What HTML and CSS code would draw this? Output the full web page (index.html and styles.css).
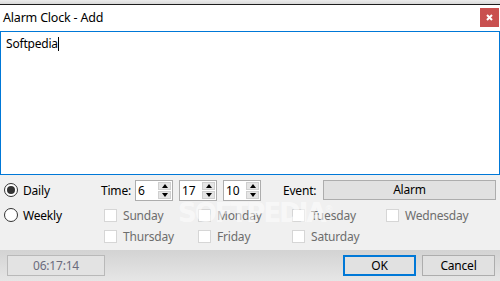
FILE: index.html
```html
<!DOCTYPE html>
<html lang="en">
<head>
    <meta charset="UTF-8">
    <title>Alarm Clock - Add</title>
    <link rel="stylesheet" href="styles.css">
</head>
<body>
    <div class="window">
        <div class="top-strip"></div>
        <div class="title-bar">
            <span class="title">Alarm Clock - Add</span>
            <div class="close-btn">
                <svg width="9" height="9" viewBox="0 0 9 9"><path d="M2 2 L7 7 M7 2 L2 7" stroke="#fff" stroke-width="2"/></svg>
            </div>
        </div>

        <div class="message-box">Softpedia<span class="caret"></span></div>

        <div class="options">
            <div class="row row-first">
                <div class="mode">
                    <span class="radio checked"></span>
                    <span>Daily</span>
                </div>
                <span class="time-label">Time:</span>
                <div class="spin"><span class="spin-value">6</span><div class="spin-btns"><span class="up"></span><span class="down"></span></div></div>
                <div class="spin"><span class="spin-value">17</span><div class="spin-btns"><span class="up"></span><span class="down"></span></div></div>
                <div class="spin"><span class="spin-value">10</span><div class="spin-btns"><span class="up"></span><span class="down"></span></div></div>
                <span class="event-label">Event:</span>
                <div class="event-btn">Alarm</div>
            </div>

            <div class="row row-second">
                <div class="mode">
                    <span class="radio"></span>
                    <span>Weekly</span>
                </div>
                <div class="days">
                    <label class="day"><span class="check"></span>Sunday</label>
                    <label class="day"><span class="check"></span>Monday</label>
                    <label class="day"><span class="check"></span>Tuesday</label>
                    <label class="day"><span class="check"></span>Wednesday</label>
                </div>
            </div>

            <div class="row row-third">
                <div class="mode"></div>
                <div class="days">
                    <label class="day"><span class="check"></span>Thursday</label>
                    <label class="day"><span class="check"></span>Friday</label>
                    <label class="day"><span class="check"></span>Saturday</label>
                </div>
            </div>

            <div class="watermark">SOFTPEDIA<sup>®</sup></div>
        </div>

        <div class="bottom-bar">
            <div class="clock">06:17:14</div>
            <div class="buttons">
                <div class="btn btn-default">OK</div>
                <div class="btn">Cancel</div>
            </div>
        </div>
    </div>
</body>
</html>
```

FILE: styles.css
```css
/* Alarm clock dialog */
body {
    margin: 0;
    font-family: "Noto Sans", "Open Sans", sans-serif;
    font-size: 12px;
    letter-spacing: -0.2px;
    color: #000;
}

.window {
    width: 500px;
    height: 281px;
    overflow: hidden;
    background-color: #f0f0f0;
}

.top-strip {
    height: 4px;
    background: linear-gradient(#ececec, #d9d9d9);
    border-bottom: 1px solid #1d1d1d;
}

.title-bar {
    height: 26px;
    background-color: #fff;
    display: flex;
    align-items: flex-start;
    justify-content: space-between;
}

.title {
    font-size: 12.5px;
    padding: 4px 0 0 3px;
}

.close-btn {
    width: 19px;
    height: 19px;
    margin: 3px 1px 0 0;
    background-color: #c9504f;
    display: flex;
    align-items: center;
    justify-content: center;
}

.message-box {
    height: 144px;
    background-color: #fff;
    border: 1px solid #0078d7;
    padding: 3px 5px;
    box-sizing: border-box;
}

.caret {
    display: inline-block;
    width: 1px;
    height: 14px;
    background-color: #000;
    vertical-align: -3px;
}

.options {
    position: relative;
    height: 75px;
    padding: 4px 0 0 4px;
    box-sizing: border-box;
}

.row {
    display: flex;
    align-items: center;
}

.row-first {
    height: 22px;
}

.row-second {
    height: 18px;
    margin-top: 5px;
}

.row-third {
    height: 18px;
    margin-top: 3px;
}

.mode {
    width: 97px;
    display: flex;
    align-items: center;
    gap: 5px;
}

.radio {
    width: 12px;
    height: 12px;
    border: 1px solid #333;
    border-radius: 50%;
    background-color: #fff;
    display: flex;
    align-items: center;
    justify-content: center;
}

.radio.checked::after {
    content: "";
    width: 8px;
    height: 8px;
    border-radius: 50%;
    background-color: #333;
}

.time-label {
    width: 34px;
}

.spin {
    width: 36px;
    height: 19px;
    border: 1px solid #adadad;
    background-color: #fff;
    display: flex;
    margin-right: 6px;
}

.spin-value {
    flex: 1;
    padding: 1px 0 0 2px;
    color: #000;
}

.spin-btns {
    width: 13px;
    display: flex;
    flex-direction: column;
    gap: 1px;
    padding: 1px;
}

.spin-btns span {
    flex: 1;
    background-color: #e5e5e5;
    border: 1px solid #cfcfcf;
    display: flex;
    align-items: center;
    justify-content: center;
}

.up::after {
    content: "";
    border-left: 3px solid transparent;
    border-right: 3px solid transparent;
    border-bottom: 4px solid #000;
}

.down::after {
    content: "";
    border-left: 3px solid transparent;
    border-right: 3px solid transparent;
    border-top: 4px solid #000;
}

.event-label {
    margin-left: 16px;
    width: 40px;
}

.event-btn {
    width: 171px;
    height: 18px;
    line-height: 18px;
    text-align: center;
    background-color: #e1e1e1;
    border: 1px solid #adadad;
}

.days {
    display: grid;
    grid-template-columns: repeat(4, 94px);
    margin-left: 3px;
}

.day {
    display: flex;
    align-items: center;
    color: #6d6d6d;
}

.check {
    width: 11px;
    height: 11px;
    border: 1px solid #d6d6d6;
    background-color: #fff;
    margin-right: 6px;
}

.watermark {
    position: absolute;
    left: 178px;
    top: 23px;
    font-family: "DejaVu Sans", sans-serif;
    font-weight: bold;
    font-size: 26px;
    color: rgba(255, 255, 255, 0.55);
    letter-spacing: -2px;
}

.watermark sup {
    font-size: 9px;
    font-weight: normal;
}

.bottom-bar {
    height: 31px;
    background: linear-gradient(#d3d3d3, #e6e6e6);
    display: flex;
    align-items: center;
    justify-content: space-between;
    padding: 0 5px 0 7px;
}

.clock {
    width: 96px;
    height: 19px;
    line-height: 19px;
    text-align: center;
    background-color: #e3e3e3;
    border: 1px solid #b9b9b9;
    color: #6b6b7d;
}

.buttons {
    display: flex;
    gap: 6px;
}

.btn {
    width: 71px;
    height: 19px;
    line-height: 19px;
    text-align: center;
    background-color: #e1e1e1;
    border: 1px solid #adadad;
}

.btn-default {
    width: 69px;
    border: 2px solid #0078d7;
    height: 17px;
    line-height: 17px;
}
```
